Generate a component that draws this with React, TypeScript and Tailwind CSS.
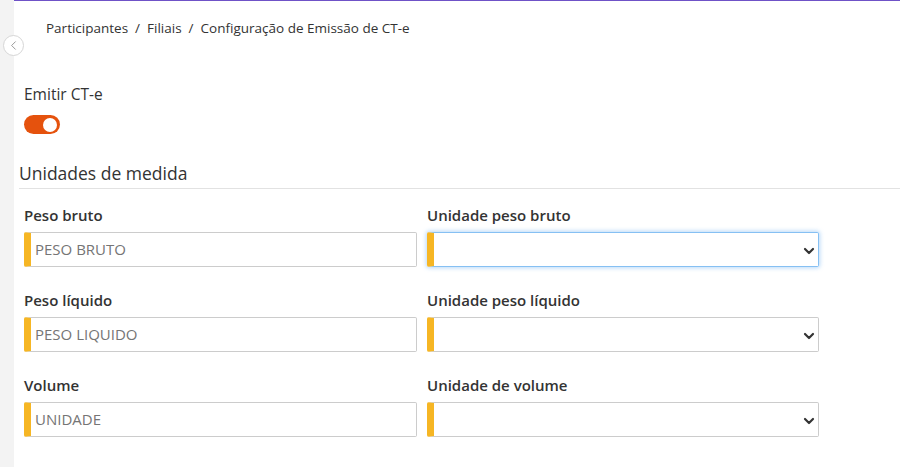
import { ChevronLeft } from "lucide-react";

const rows = [
  { left: "Peso bruto", placeholder: "PESO BRUTO", right: "Unidade peso bruto", focused: true },
  { left: "Peso líquido", placeholder: "PESO LIQUIDO", right: "Unidade peso líquido", focused: false },
  { left: "Volume", placeholder: "UNIDADE", right: "Unidade de volume", focused: false },
];

function Chevron() {
  return (
    <svg width="12" height="8" viewBox="0 0 12 8" className="absolute right-[3px] top-[14px]">
      <path d="M2 2l4 4 4-4" fill="none" stroke="#333" strokeWidth="2.2" strokeLinecap="round" strokeLinejoin="round" />
    </svg>
  );
}

export default function App() {
  return (
    <div
      className="relative flex w-[900px] h-[467px] bg-white text-[#333] overflow-hidden"
      style={{ fontFamily: '"Open Sans", "Noto Sans", sans-serif' }}
    >
      <div className="w-[14px] shrink-0 bg-[#f3f3f3]" />
      <div className="absolute left-[3px] top-[35px] w-[21px] h-[21px] rounded-full bg-white border border-[#d6d6d6] flex items-center justify-center z-10">
        <ChevronLeft size={15} strokeWidth={1.2} color="#777" />
      </div>

      <div className="flex-1 border-t border-[#6f52c7]">
        <nav className="pl-[32px] pt-[20px] text-[13.5px] text-[#333] flex gap-[7px] h-[34px] items-center">
          <span>Participantes</span>
          <span>/</span>
          <span>Filiais</span>
          <span>/</span>
          <span>Configuração de Emissão de CT-e</span>
        </nav>

        <div className="pl-[10px] pt-[48px]">
          <div className="text-[15.5px] leading-[22px] font-medium">Emitir CT-e</div>
          <div className="mt-[10px] w-[36px] h-[19px] rounded-full bg-[#e5520d] flex items-center justify-end pr-[3px]">
            <div className="w-[14px] h-[14px] rounded-full bg-white" />
          </div>
        </div>

        <div className="ml-[5px] mt-[27px] border-b border-[#e2e2e2] pb-[3px]">
          <h2 className="text-[17.5px] leading-[24px] font-medium">Unidades de medida</h2>
        </div>

        <div className="pl-[10px] pt-[15px] grid grid-cols-[393px_392px] gap-x-[10px]">
          {rows.map((r) => (
            <div key={r.left} className="contents">
              <div className="h-[85px]">
                <label className="block text-[15px] leading-[22px] font-semibold">{r.left}</label>
                <div className="mt-[6px] h-[35px] border border-[#cccccc] rounded-[2px] flex items-center border-l-[7px] border-l-[#f6b624]">
                  <span className="pl-[4px] text-[15px] text-[#757575]">{r.placeholder}</span>
                </div>
              </div>
              <div className="h-[85px]">
                <label className="block text-[15px] leading-[22px] font-semibold">{r.right}</label>
                <div
                  className={
                    r.focused
                      ? "relative mt-[6px] h-[35px] border border-[#86c0f3] rounded-[2px] border-l-[7px] border-l-[#f6b624] shadow-[0_0_4px_1px_rgba(100,170,240,0.45)]"
                      : "relative mt-[6px] h-[35px] border border-[#cccccc] rounded-[2px] border-l-[7px] border-l-[#f6b624]"
                  }
                >
                  <Chevron />
                </div>
              </div>
            </div>
          ))}
        </div>
      </div>
    </div>
  );
}
